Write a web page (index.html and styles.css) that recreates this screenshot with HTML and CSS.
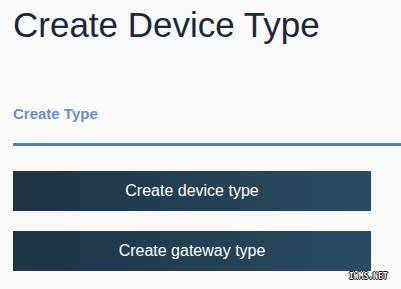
FILE: index.html
```html
<!DOCTYPE html>
<html lang="en">
<head>
    <meta charset="UTF-8">
    <title>Create Device Type</title>
    <link rel="stylesheet" href="styles.css">
</head>
<body>
    <main class="page">
        <h1 class="page-title">Create Device Type</h1>

        <div class="tabs">
            <span class="tab active">Create Type</span>
        </div>

        <div class="actions">
            <button class="action-btn">Create device type</button>
            <button class="action-btn">Create gateway type</button>
        </div>
    </main>
    <div class="watermark">IWMS.NET</div>
</body>
</html>
```

FILE: styles.css
```css
body {
    margin: 0;
    background-color: #f9f9f9;
    font-family: "Liberation Sans", Arial, sans-serif;
}
.page {
    padding: 5px 0 0 13px;
}
.page-title {
    margin: 0;
    font-size: 35px;
    font-weight: normal;
    line-height: 40px;
    color: #1b2835;
}
.tabs {
    margin-top: 60px;
    padding-bottom: 20px;
    border-bottom: 3px solid #4a80c4;
}
.tab {
    display: block;
    font-size: 15px;
    font-weight: bold;
    line-height: 18px;
    color: #6b8fcb;
}
.actions {
    display: flex;
    flex-direction: column;
    gap: 20px;
    margin-top: 25px;
    width: 358px;
}
.action-btn {
    height: 40px;
    border: none;
    padding: 0;
    background: linear-gradient(to right, #1e3346, #284c61);
    color: #ffffff;
    font-family: "Liberation Sans", Arial, sans-serif;
    font-size: 16px;
    cursor: pointer;
}
.watermark {
    position: absolute;
    left: 349px;
    top: 272px;
    font-family: "DejaVu Sans Mono", monospace;
    font-size: 8px;
    font-weight: bold;
    line-height: 10px;
    color: #ffffff;
    text-shadow: 1px 0 0 #000, -1px 0 0 #000, 0 1px 0 #000, 0 -1px 0 #000;
}
```
